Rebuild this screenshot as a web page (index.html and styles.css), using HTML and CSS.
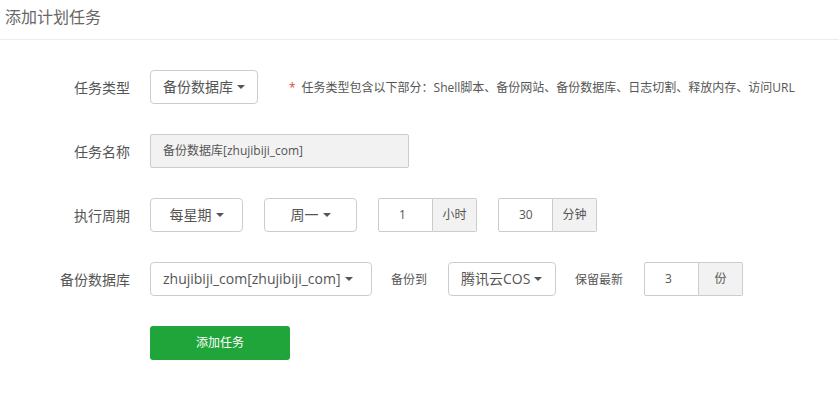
FILE: index.html
```html
<!DOCTYPE html>
<html lang="zh-CN">
<head>
<meta charset="utf-8">
<title>添加计划任务</title>
<link rel="stylesheet" href="styles.css">
</head>
<body>
<div class="page">
  <div class="header">添加计划任务</div>
  <div class="form">
    <div class="row">
      <div class="label">任务类型</div>
      <div class="btn dd">备份数据库 <span class="caret"></span></div>
      <div class="note"><span class="star">*</span>任务类型包含以下部分：Shell脚本、备份网站、备份数据库、日志切割、释放内存、访问URL</div>
    </div>
    <div class="row">
      <div class="label">任务名称</div>
      <div class="input disabled">备份数据库[zhujibiji_com]</div>
    </div>
    <div class="row">
      <div class="label">执行周期</div>
      <div class="btn dd fixed">每星期 <span class="caret"></span></div>
      <div class="btn dd fixed">周一 <span class="caret"></span></div>
      <div class="group">
        <div class="num">1</div>
        <div class="addon">小时</div>
      </div>
      <div class="group">
        <div class="num">30</div>
        <div class="addon">分钟</div>
      </div>
    </div>
    <div class="row">
      <div class="label">备份数据库</div>
      <div class="btn dd db">zhujibiji_com[zhujibiji_com] <span class="caret"></span></div>
      <div class="inline-label">备份到</div>
      <div class="btn dd cos">腾讯云COS <span class="caret"></span></div>
      <div class="inline-label">保留最新</div>
      <div class="group">
        <div class="num">3</div>
        <div class="addon">份</div>
      </div>
    </div>
    <div class="row">
      <div class="label"></div>
      <div class="submit">添加任务</div>
    </div>
  </div>
</div>
</body>
</html>
```

FILE: styles.css
```css
html, body {
  margin: 0;
  padding: 0;
  background: #fff;
}
body {
  font-family: "Open Sans", "Noto Sans CJK SC", sans-serif;
  font-weight: 400;
  color: #555;
}
.header {
  font-size: 16px;
  line-height: 28px;
  padding: 3px 5px 8px;
  color: #666;
  border-bottom: 1px solid #ececec;
}
.form {
  padding-top: 30px;
}
.row {
  display: flex;
  align-items: center;
  height: 34px;
  margin-bottom: 30px;
}
.row + .row {
  margin-top: 1px;
}
.label {
  width: 130px;
  margin-right: 20px;
  text-align: right;
  font-size: 14px;
  color: #555;
  flex: none;
}
.btn {
  box-sizing: border-box;
  height: 34px;
  line-height: 32px;
  border: 1px solid #ccc;
  border-radius: 4px;
  padding: 0 12px;
  font-size: 14px;
  color: #555;
  background: #fff;
  white-space: nowrap;
  flex: none;
  display: flex;
  align-items: center;
  gap: 4px;
}
.btn.fixed {
  width: 93px;
  justify-content: center;
  margin-right: 21px;
}
.btn.db {
  width: 222px;
}
.btn.cos {
  width: 108px;
}
.caret {
  display: inline-block;
  width: 0;
  height: 0;
  border-top: 4px solid #555;
  border-left: 4px solid transparent;
  border-right: 4px solid transparent;
}
.note {
  margin-left: 31px;
  font-size: 12px;
  color: #555;
  white-space: nowrap;
}
.star {
  color: #e0463e;
  margin-right: 6px;
}
.input {
  box-sizing: border-box;
  width: 259px;
  height: 34px;
  line-height: 32px;
  border: 1px solid #ccc;
  border-radius: 2px;
  padding: 0 12px;
  font-size: 12px;
  color: #555;
}
.input.disabled {
  background: #f2f2f2;
}
.group {
  display: flex;
  height: 34px;
  margin-right: 21px;
  flex: none;
}
.num {
  box-sizing: border-box;
  width: 55px;
  height: 34px;
  line-height: 32px;
  border: 1px solid #ccc;
  border-radius: 2px 0 0 2px;
  padding-left: 20px;
  font-size: 12px;
  color: #555;
}
.addon {
  box-sizing: border-box;
  width: 44px;
  height: 34px;
  line-height: 32px;
  border: 1px solid #ccc;
  border-left: none;
  border-radius: 0 2px 2px 0;
  background: #f2f2f2;
  text-align: center;
  font-size: 12px;
  color: #555;
}
.inline-label {
  font-size: 12px;
  color: #555;
  margin: 0 21px 0 19px;
  white-space: nowrap;
}
.submit {
  box-sizing: border-box;
  width: 140px;
  height: 34px;
  line-height: 34px;
  border-radius: 3px;
  background: #20a53a;
  color: #fff;
  text-align: center;
  font-size: 12px;
}
```
